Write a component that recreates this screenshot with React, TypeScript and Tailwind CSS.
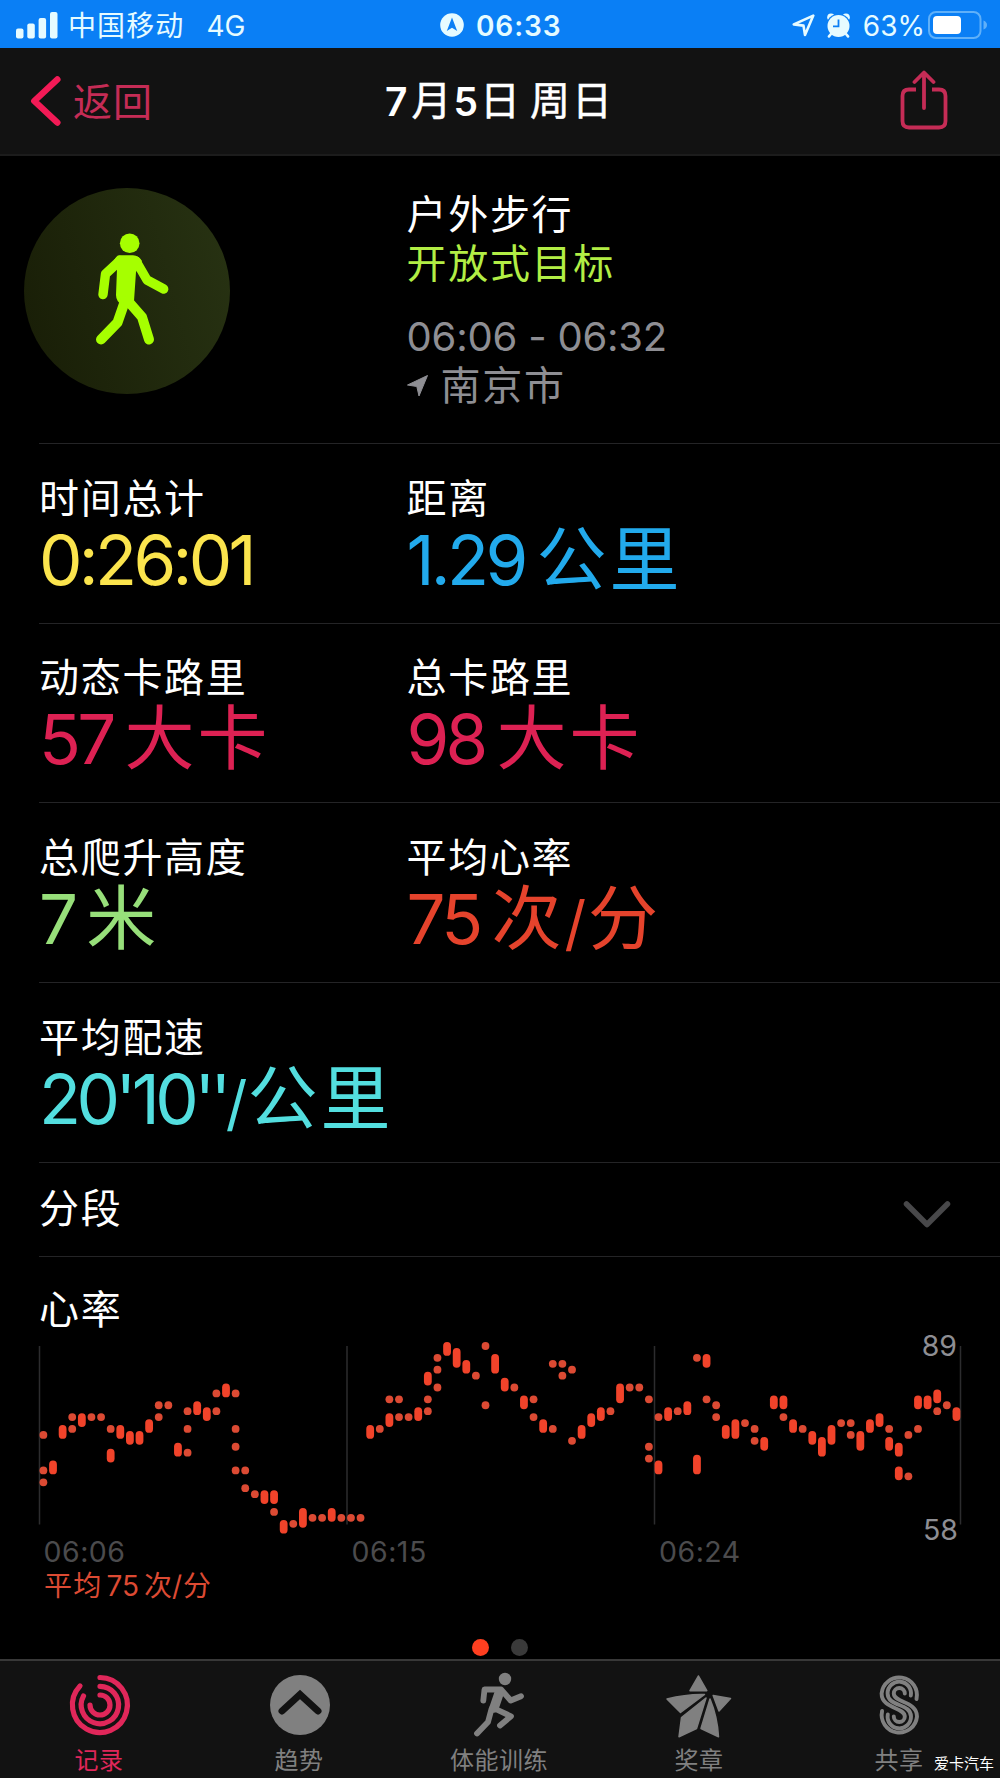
import React from 'react';

const HEART: number[][][] = [
  [[74, 74], [68, 68], [66, 66]], [[69, 68]], [[75, 74]], [[77, 77], [75, 75]], [[77, 76]], [[77, 77]], [[77, 77]],
  [[75, 75], [71, 70]], [[75, 74]], [[74, 73]], [[74, 73]], [[76, 75]], [[79, 79], [77, 77]], [[79, 79]], [[72, 71]],
  [[78, 78], [75, 75], [71, 71]], [[79, 78]], [[78, 77]], [[81, 81], [78, 78]], [[82, 81]],
  [[81, 81], [75, 75], [72, 72], [68, 68]], [[68, 68], [65, 65]], [[64, 64]], [[64, 63]], [[64, 63], [61, 61]],
  [[59, 58]], [[59, 59]], [[61, 59]], [[60, 60]], [[60, 60]], [[61, 60]], [[60, 60]], [[60, 60]], [[60, 60]],
  [[75, 74]], [[75, 75]], [[80, 80], [77, 76]], [[80, 80], [77, 77]], [[77, 77]], [[78, 77]],
  [[84, 83], [80, 80], [78, 78]], [[87, 87], [85, 85], [82, 82]], [[89, 88]], [[88, 86]], [[86, 85]], [[84, 84]],
  [[89, 89], [79, 79]], [[87, 85]], [[83, 82]], [[82, 82]], [[80, 79]], [[80, 80], [77, 77]], [[76, 75]],
  [[86, 86], [75, 75]], [[86, 86], [84, 84]], [[85, 85], [73, 73]], [[75, 74]], [[77, 76]], [[78, 77]], [[78, 78]],
  [[82, 80]], [[82, 82]], [[82, 82]], [[80, 80], [72, 72], [70, 70]], [[77, 77], [69, 68]], [[78, 77]], [[78, 78]],
  [[79, 78]], [[87, 87], [70, 68]], [[87, 86], [80, 80]], [[79, 79], [77, 77]], [[75, 74]], [[76, 74]], [[76, 76]],
  [[75, 75], [73, 73]], [[73, 72]], [[80, 79]], [[80, 79], [77, 77]], [[76, 75]], [[75, 75]], [[74, 73]], [[73, 71]],
  [[75, 73]], [[76, 76]], [[76, 76], [74, 74]], [[74, 72]], [[76, 75]], [[77, 76]], [[75, 75], [73, 72]],
  [[72, 71], [68, 67]], [[74, 74], [67, 67]], [[80, 79], [75, 75]], [[80, 79]], [[81, 80], [78, 78]], [[79, 79]],
  [[78, 77]],
];

function StatusBar() {
  return (
    <div className="flex h-12 shrink-0 items-center bg-[#0a7ff5] pl-4 pr-[12px] pt-[2px] text-[#e6fbff]">
      <div className="flex w-[430px] items-center">
        <svg width="42" height="27" viewBox="0 0 42 27" fill="currentColor">
          <rect x="0" y="16.5" width="7.5" height="10" rx="2" />
          <rect x="11.3" y="11.5" width="7.5" height="15" rx="2" />
          <rect x="22.6" y="6" width="7.5" height="20.5" rx="2" />
          <rect x="34" y="0" width="7.5" height="26.5" rx="2" />
        </svg>
        <span className="ml-[10px] mt-[2px] text-[28px] leading-none tracking-[1.1px]">中国移动</span>
        <span className="ml-[22px] mt-[2px] text-[28px] leading-none">4G</span>
      </div>
      <svg className="-ml-[6px]" width="24" height="24" viewBox="0 0 24 24">
        <circle cx="12" cy="12" r="11.8" fill="#e6fbff" />
        <path d="M12 4.5 L17.2 18 L12 14.7 L6.8 18 Z" fill="#0a7ff5" />
      </svg>
      <span className="ml-3 mt-[2px] text-[28px] font-semibold leading-none tracking-[0.9px]">06:33</span>
      <div className="ml-auto flex items-center">
        <svg width="23" height="23" viewBox="0 0 23 23" fill="none" stroke="currentColor" strokeWidth="2.6" strokeLinejoin="round">
          <path d="M21.3 1.6 L1.8 10.4 L11.5 11.6 L13 21 Z" />
        </svg>
        <svg className="ml-[11px]" width="26" height="25" viewBox="0 0 26 25">
          <circle cx="5" cy="4.3" r="3.8" fill="currentColor" />
          <circle cx="20" cy="4.3" r="3.8" fill="currentColor" />
          <circle cx="12.5" cy="13" r="12.2" fill="#0a7ff5" />
          <circle cx="12.5" cy="13" r="11" fill="currentColor" />
          <path d="M5 21 L3 23.4 M20 21 L22 23.4" stroke="currentColor" strokeWidth="2.6" strokeLinecap="round" />
          <path d="M12.5 6.5 V13.3 H7" stroke="#0a7ff5" strokeWidth="1.8" fill="none" />
        </svg>
        <span className="ml-[11px] mt-[2px] text-[28px] leading-none">63%</span>
        <svg className="ml-[3px]" width="60" height="28" viewBox="0 0 60 28">
          <rect x="1" y="1" width="51.5" height="26" rx="7" fill="none" stroke="#5fb0f9" strokeWidth="2" />
          <rect x="5" y="5" width="28" height="18" rx="4" fill="#fff" />
          <path d="M55.5 9.5 Q59 11 59 14 Q59 17 55.5 18.5 Z" fill="#5fb0f9" />
        </svg>
      </div>
    </div>
  );
}

function Header() {
  return (
    <div className="flex h-[108px] shrink-0 items-center border-b-2 border-[#1c1c1c] bg-[#121212] pl-[30px] pr-[52px]">
      <div className="flex w-[355px] items-center text-[#c52c56]">
        <svg width="32" height="52" viewBox="0 0 32 52" fill="none" stroke="#f31a56" strokeWidth="6.5" strokeLinecap="round" strokeLinejoin="round">
          <path d="M27.3 4.5 L4.3 26 L27.3 47.5" />
        </svg>
        <span className="ml-[11px] text-[39px] leading-none tracking-[1px]">返回</span>
      </div>
      <div className="flex items-center whitespace-nowrap text-[40px] leading-none text-white">
        <span className="text-[39px] font-semibold">7</span>
        <span className="ml-[4px] [-webkit-text-stroke:0.5px_white]">月</span>
        <span className="ml-[2px] text-[39px] font-semibold">5</span>
        <span className="ml-[2px] tracking-[2px] [-webkit-text-stroke:0.5px_white]">日</span>
        <span className="ml-[8px] tracking-[2px] [-webkit-text-stroke:0.5px_white]">周日</span>
      </div>
      <svg className="mb-[2px] ml-auto" width="48" height="60" viewBox="0 0 48 60" fill="none" stroke="#c52c56" strokeWidth="3.8" strokeLinecap="round" strokeLinejoin="round">
        <path strokeLinecap="butt" d="M16 19.5 H9 Q2.5 19.5 2.5 26 V51 Q2.5 57.5 9 57.5 H39 Q45.500 57.5 45.500 51 V26 Q45.500 19.5 39 19.5 H32" />
        <path d="M24 38 V3 M14.500 12 L24 2.500 L33.500 12" />
      </svg>
    </div>
  );
}

function Summary() {
  return (
    <div className="flex h-[287px] shrink-0 items-start">
      <div className="ml-6 mt-8 flex h-[206px] w-[206px] items-center justify-center rounded-full bg-linear-[75deg,#181d06,#283313]">
        <svg width="206" height="206" viewBox="24 188 206 206" fill="none" stroke="#a6ff00" strokeLinecap="round" strokeLinejoin="round">
          <circle cx="129.700" cy="243.200" r="9.800" fill="#a6ff00" stroke="none" />
          <path d="M119 255.300 H133 Q139 256 142 261 L136 272 L134 301 Q130 306 122 305 Q116 301 116 295 L117 269 L113 263 Q116 255.300 119 255.300 Z" fill="#a6ff00" stroke="none" />
          <path strokeWidth="9.400" d="M120 260.500 L105.500 274 L103 294.500" />
          <path strokeWidth="9.400" d="M136 261 L147 280 L163.700 289" />
          <path strokeWidth="10" d="M125 301 L117.500 322.500 L101 339.500" />
          <path strokeWidth="10" d="M128 301 L142 317 L149 339.500" />
        </svg>
      </div>
      <div className="ml-[176.500px] mt-[34px] flex flex-col text-[40px] leading-none tracking-[1.7px]">
        <span className="leading-[49px] text-white">户外步行</span>
        <span className="leading-[49px] text-[#b2ee45]">开放式目标</span>
        <span className="mt-6 text-[40px] leading-[49px] tracking-[-0.2px] text-[#8e8e93]">06:06 - 06:32</span>
        <span className="flex items-center leading-[49px] text-[#8e8e93]">
          <svg className="mr-[13px]" width="21" height="22" viewBox="0 0 21 22" fill="currentColor">
            <path d="M20.500 0.500 L0.500 10 L9.800 11.500 L12 21 Z" stroke="currentColor" strokeLinejoin="round" />
          </svg>
          南京市
        </span>
      </div>
    </div>
  );
}

type StatProps = { label: string; color: string; num: string; track?: string; children?: React.ReactNode };

function Stat({ label, color, num, track = 'tracking-[-3.700px]', children }: StatProps) {
  return (
    <div className="flex flex-col whitespace-nowrap">
      <span className="text-[40px] leading-[40px] tracking-[1.7px] text-white">{label}</span>
      <span className={`mt-[6px] flex h-[70px] items-center leading-[70px] ${color}`}>
        <span className={`text-[69px] ${track}`}>{num}</span>
        {children}
      </span>
    </div>
  );
}

function Unit({ children }: { children: React.ReactNode }) {
  return <span className="ml-[12px] text-[70px] tracking-[3px]">{children}</span>;
}

function StatRow({ children }: { children: React.ReactNode }) {
  return (
    <div className="ml-[39px] grid h-[179.7px] shrink-0 grid-cols-[367.500px_1fr] border-t-[1.500px] border-[#242426] pt-[34.500px]">
      {children}
    </div>
  );
}

function HeartChart() {
  const x = (i: number) => 43.4 + i * 9.611 - 39;
  const y = (v: number) => 10 + (89 - v) * 5.926;
  return (
    <svg className="ml-[39px] shrink-0 overflow-visible" width="925" height="240" viewBox="0 0 925 240">
      {[0.5, 308, 615.5, 921.5].map((gx) => (
        <line key={gx} x1={gx} x2={gx} y1="10" y2="188.500" stroke="#2c2c2e" strokeWidth="1.500" />
      ))}
      {HEART.flatMap((col, i) =>
        col.map(([hi, lo]) => (
          <rect
            key={`${i}-${hi}`}
            x={x(i) - 3.9}
            width="7.800"
            y={y(hi) - 3.9}
            height={y(lo) - y(hi) + 7.8}
            rx="3.900"
            fill={hi === lo ? '#dc4a33' : '#f1432a'}
          />
        )),
      )}
      <g fontSize="28.500" fill="#4b4b4d" letterSpacing="0.500">
        <text x="4.500" y="225.500">06:06</text>
        <text x="312.500" y="225.500">06:15</text>
        <text x="620" y="225.500">06:24</text>
      </g>
      <g fontSize="28.500" fill="#8e8e93" textAnchor="end">
        <text x="918" y="19.500">89</text>
        <text x="919" y="204">58</text>
      </g>
    </svg>
  );
}

function Tab({ label, active, children }: { label: string; active?: boolean; children: React.ReactNode }) {
  return (
    <div className={`flex flex-1 flex-col items-center ${active ? 'text-[#e0275a]' : 'text-[#808080]'}`}>
      <svg width="76" height="70" viewBox="-38 -35 76 70">{children}</svg>
      <span className="-ml-[2px] mt-[6px] text-[24px] leading-[30px] tracking-[0.500px]">{label}</span>
    </div>
  );
}

function TabBar() {
  return (
    <div className="relative flex h-[119px] shrink-0 border-t-2 border-[#383838] bg-[#121212] pt-[9px]">
      <Tab label="记录" active>
        <g fill="none" stroke="currentColor" strokeWidth="5.200" strokeLinecap="round">
          <path d="M0 -27.500 A27.500 27.500 0 1 1 -20 -19" />
          <path d="M0 -18.700 A18.700 18.700 0 1 1 -16.500 -9" />
          <path d="M0 -10 A10 10 0 1 1 -10 0" />
        </g>
      </Tab>
      <Tab label="趋势">
        <circle r="30" fill="currentColor" />
        <path d="M-18 6 L0 -10.500 L18 6" fill="none" stroke="#121212" strokeWidth="7" strokeLinecap="round" />
      </Tab>
      <Tab label="体能训练">
        <circle cx="5" cy="-26" r="6.200" fill="currentColor" />
        <g fill="none" stroke="currentColor" strokeWidth="5.800" strokeLinecap="round" strokeLinejoin="round">
          <path d="M-16.700 -4.300 L-15.500 -15.500 L1 -15.700 L10.700 -4.500 L21 -8.800" />
          <path strokeWidth="9.500" d="M-0.500 -13 L-6 3" />
          <path d="M-8.500 4 L-12 17 L-23 28.500" />
          <path d="M-4.500 4 L11 11.300 L0 20.500" />
        </g>
      </Tab>
      <Tab label="奖章">
        <g transform="translate(-1.500 0)" fill="currentColor" stroke="currentColor" strokeWidth="1.500" strokeLinejoin="round">
          <path d="M0 -29 L8.300 -14.300 H-8.500 Z" />
          <path d="M-31.500 -6 Q-12 -11 6 -10.500 L-18 7.500 Z" />
          <path d="M14.700 -9.500 L32 -6.500 L20.500 6 Z" />
          <path d="M7.500 -7 L-2 23.500 L-19.500 31.800 L-17 12.500 Z" />
          <path d="M11.500 -6 Q19 12 20 31.800 L2.500 23.500 Z" />
        </g>
      </Tab>
      <Tab label="共享">
        <g transform="translate(-0.700 0)" fill="none" stroke="currentColor" strokeWidth="3.900" strokeLinecap="round">
          <path d="M17.200 -6 A17.700 17.700 0 1 0 -17.700 -11.500 C-17.700 4 5.500 2 5.500 11.500 A5.500 5.500 0 0 1 -5.500 11.500" />
          <path d="M11.500 -9.500 A11.700 11.700 0 1 0 -11.700 -11.500 C-11.700 2 11.700 -2 11.700 11.500 A11.700 11.700 0 1 1 -11.500 9.500" />
          <path d="M5.500 -11.500 A5.500 5.500 0 0 0 -5.500 -11.500 C-5.500 -2 17.700 -4 17.700 11.500 A17.700 17.700 0 1 1 -17.200 6" />
        </g>
      </Tab>
      <span className="absolute bottom-[7px] right-[6px] text-[15px] leading-none text-white">爱卡汽车</span>
    </div>
  );
}

export default function App() {
  return (
    <div className="flex h-[1778px] w-[1000px] flex-col overflow-hidden bg-black font-['Inter','Noto_Sans_CJK_SC',sans-serif]">
      <StatusBar />
      <Header />
      <Summary />
      <StatRow>
        <Stat label="时间总计" color="text-[#fbe44d]" num="0:26:01" />
        <Stat label="距离" color="text-[#22aaec]" num="1.29">
          <Unit>公里</Unit>
        </Stat>
      </StatRow>
      <StatRow>
        <Stat label="动态卡路里" color="text-[#dd2153]" num="57">
          <Unit>大卡</Unit>
        </Stat>
        <Stat label="总卡路里" color="text-[#dd2153]" num="98">
          <Unit>大卡</Unit>
        </Stat>
      </StatRow>
      <StatRow>
        <Stat label="总爬升高度" color="text-[#97df7a]" num="7">
          <Unit>米</Unit>
        </Stat>
        <Stat label="平均心率" color="text-[#e5432c]" num="75">
          <Unit>次</Unit>
          <span className="translate-y-[4px] text-[60px]">/</span>
          <span className="ml-[2px] text-[70px]">分</span>
        </Stat>
      </StatRow>
      <StatRow>
        <Stat label="平均配速" color="text-[#53dedf]" num="20'10''" track="tracking-[-4.500px]">
          <span className="-ml-[1px] translate-y-[4px] text-[60px]">/</span>
          <span className="text-[70px] tracking-[3px]">公里</span>
        </Stat>
      </StatRow>
      <div className="ml-[39px] flex h-[95px] shrink-0 items-center justify-between border-y-[1.500px] border-[#242426] pr-[49px]">
        <span className="text-[40px] leading-none tracking-[1.7px] text-white">分段</span>
        <svg className="mt-3" width="48" height="30" viewBox="0 0 48 30" fill="none" stroke="#48484a" strokeWidth="5.500" strokeLinecap="round" strokeLinejoin="round">
          <path d="M3.500 4 L24 24.500 L44.500 4" />
        </svg>
      </div>
      <span className="ml-[39px] mt-[33px] text-[40px] leading-[40px] tracking-[1.7px] text-white">心率</span>
      <div className="mt-[6px] flex flex-col">
        <HeartChart />
        <div className="-mt-[5px] ml-[44px] flex items-center text-[28px] leading-[30px] text-[#dc4a33]">
          <span className="tracking-[1.200px]">平均</span>
          <span className="ml-[4px]">75</span>
          <span className="ml-[5px]">次</span>
          <span>/</span>
          <span className="ml-px">分</span>
        </div>
      </div>
      <div className="mb-[3px] mt-auto flex items-center justify-center gap-[22px]">
        <div className="size-[17px] rounded-full bg-[#ff3f20]" />
        <div className="size-[17px] rounded-full bg-[#3a3a3a]" />
      </div>
      <TabBar />
    </div>
  );
}
